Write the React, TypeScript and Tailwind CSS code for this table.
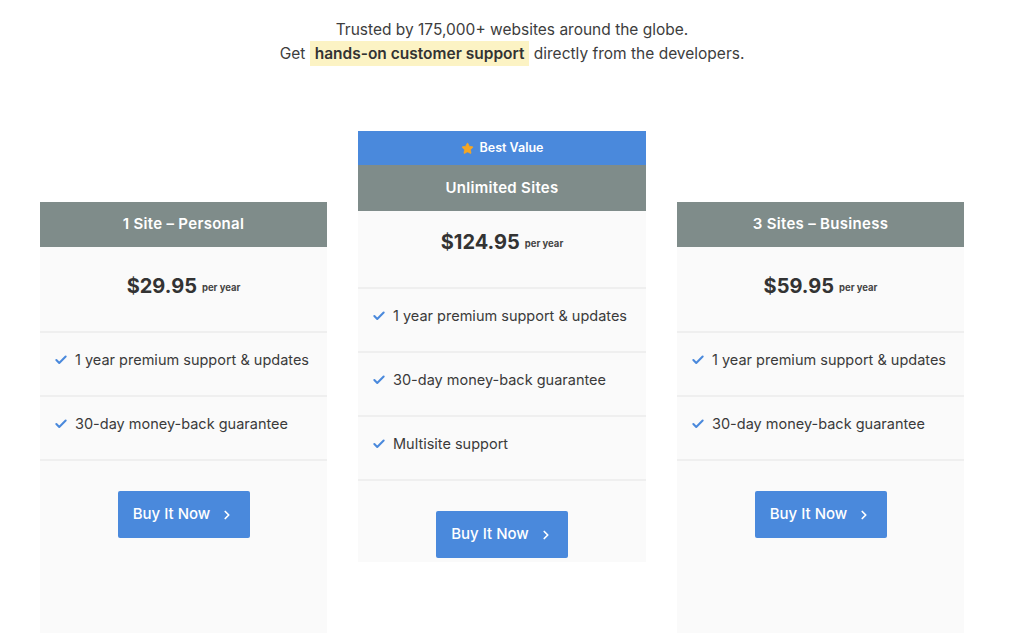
import { Check, ChevronRight, Star } from 'lucide-react'

type Plan = {
  name: string
  price: string
  features: string[]
  featured?: boolean
}

const plans: Plan[] = [
  {
    name: '1 Site – Personal',
    price: '$29.95',
    features: ['1 year premium support & updates', '30-day money-back guarantee'],
  },
  {
    name: 'Unlimited Sites',
    price: '$124.95',
    features: ['1 year premium support & updates', '30-day money-back guarantee', 'Multisite support'],
    featured: true,
  },
  {
    name: '3 Sites – Business',
    price: '$59.95',
    features: ['1 year premium support & updates', '30-day money-back guarantee'],
  },
]

function PlanCard({ plan }: { plan: Plan }) {
  return (
    <div
      className={`flex h-[431px] shrink-0 flex-col bg-[#fafafa] ${
        plan.featured ? 'mt-0 w-[288px]' : 'mt-[71px] w-[287px]'
      }`}
    >
      {plan.featured && (
        <div className="flex h-[34px] items-center justify-center gap-[6px] bg-[#4a89dc] text-[12.5px] font-semibold text-white">
          <Star className="h-[13px] w-[13px] fill-[#f5a623] text-[#f5a623]" strokeWidth={1.5} />
          Best Value
        </div>
      )}
      {/* Header */}
      <div
        className={`flex items-center justify-center bg-[#7f8c8a] text-[15px] font-semibold tracking-[0.3px] text-white ${
          plan.featured ? 'h-[46px]' : 'h-[45px]'
        }`}
      >
        {plan.name}
      </div>

      {/* Price */}
      <div
        className={`flex items-start justify-center gap-[5px] ${
          plan.featured ? 'h-[76px] pt-[17px]' : 'h-[84px] pt-[25px]'
        }`}
      >
        <span className="text-[20px] leading-[28px] font-bold text-[#333]">{plan.price}</span>
        <span className="pt-[9px] text-[9.5px] leading-[14px] font-bold text-[#444]">per year</span>
      </div>

      {/* Features */}
      <ul className="border-b-2 border-[#efefef]">
        {plan.features.map((f) => (
          <li
            key={f}
            className="flex h-[64px] items-start gap-[7px] border-t-2 border-[#efefef] pt-[16px] pl-[14px] text-[14.5px] leading-[22px] text-[#3a3a3a]"
          >
            <Check className="mt-[4px] h-[14px] w-[14px] text-[#4a89dc]" strokeWidth={3.5} />
            {f}
          </li>
        ))}
      </ul>

      {/* Button */}
      <div className="flex justify-center pt-[30px]">
        <button className="flex h-[47px] w-[132px] items-center justify-center gap-[10px] rounded-[2px] bg-[#4a89dc] text-[15px] font-medium text-white">
          Buy It Now
          <ChevronRight className="h-[14px] w-[14px]" strokeWidth={3} />
        </button>
      </div>
    </div>
  )
}

export default function App() {
  return (
    <div className="h-[633px] overflow-hidden bg-white font-['Inter','Liberation_Sans',sans-serif]">
      <div className="pt-[18px] text-center text-[15.5px] leading-[24px] text-[#3d3d3d]">
        <p>Trusted by 175,000+ websites around the globe.</p>
        <p>
          Get{' '}
          <span className="bg-[#fcf3c4] px-[5px] py-[3px] font-semibold text-[#333]">hands-on customer support</span>{' '}
          directly from the developers.
        </p>
      </div>

      <div className="flex items-start gap-[31px] pt-[65px] pl-[40px]">
        {plans.map((plan) => (
          <PlanCard key={plan.name} plan={plan} />
        ))}
      </div>
    </div>
  )
}
